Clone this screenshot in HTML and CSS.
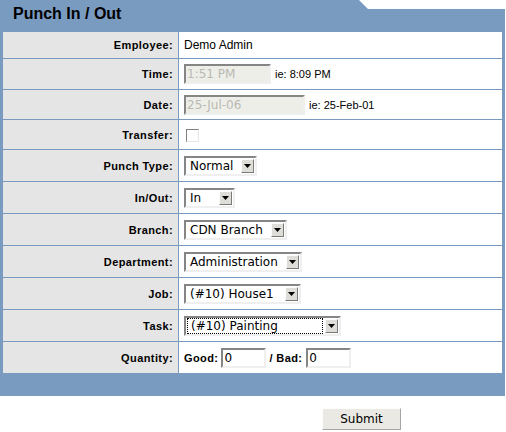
FILE: index.html
```html
<!DOCTYPE html>
<html>
<head>
    <meta charset="UTF-8">
    <title>Punch In / Out</title>
    <link rel="stylesheet" href="styles.css">
</head>
<body>
    <div class="frame">
        <div class="header">
            <h1>Punch In / Out</h1>
        </div>
        <table class="form">
            <tr class="row-emp">
                <td class="label">Employee:</td>
                <td class="value">Demo Admin</td>
            </tr>
            <tr class="row-time">
                <td class="label">Time:</td>
                <td class="value"><span class="input disabled w-time">1:51 PM</span><span class="hint">ie: 8:09 PM</span></td>
            </tr>
            <tr class="row-date">
                <td class="label">Date:</td>
                <td class="value"><span class="input disabled w-date">25-Jul-06</span><span class="hint">ie: 25-Feb-01</span></td>
            </tr>
            <tr class="row-check">
                <td class="label">Transfer:</td>
                <td class="value"><span class="checkbox"></span></td>
            </tr>
            <tr>
                <td class="label">Punch Type:</td>
                <td class="value"><span class="select w-normal"><span class="text">Normal</span><span class="arrow"><svg width="7" height="4" viewBox="0 0 7 4"><path d="M0 0H7L3.5 4Z" fill="#000"/></svg></span></span></td>
            </tr>
            <tr>
                <td class="label">In/Out:</td>
                <td class="value"><span class="select w-in"><span class="text">In</span><span class="arrow"><svg width="7" height="4" viewBox="0 0 7 4"><path d="M0 0H7L3.5 4Z" fill="#000"/></svg></span></span></td>
            </tr>
            <tr>
                <td class="label">Branch:</td>
                <td class="value"><span class="select w-branch"><span class="text">CDN Branch</span><span class="arrow"><svg width="7" height="4" viewBox="0 0 7 4"><path d="M0 0H7L3.5 4Z" fill="#000"/></svg></span></span></td>
            </tr>
            <tr>
                <td class="label">Department:</td>
                <td class="value"><span class="select w-dept"><span class="text">Administration</span><span class="arrow"><svg width="7" height="4" viewBox="0 0 7 4"><path d="M0 0H7L3.5 4Z" fill="#000"/></svg></span></span></td>
            </tr>
            <tr>
                <td class="label">Job:</td>
                <td class="value"><span class="select w-job"><span class="text">(#10) House1</span><span class="arrow"><svg width="7" height="4" viewBox="0 0 7 4"><path d="M0 0H7L3.5 4Z" fill="#000"/></svg></span></span></td>
            </tr>
            <tr>
                <td class="label">Task:</td>
                <td class="value"><span class="select w-task focused"><span class="text">(#10) Painting</span><span class="arrow"><svg width="7" height="4" viewBox="0 0 7 4"><path d="M0 0H7L3.5 4Z" fill="#000"/></svg></span></span></td>
            </tr>
            <tr>
                <td class="label">Quantity:</td>
                <td class="value"><span class="qty-label">Good:</span><span class="input w-qty">0</span><span class="qty-label sep">/ Bad:</span><span class="input w-qty">0</span></td>
            </tr>
        </table>
    </div>
    <div class="actions">
        <button class="submit">Submit</button>
    </div>
</body>
</html>
```

FILE: styles.css
```css
body {
    margin: 0;
    font-family: "Liberation Sans", Arial, sans-serif;
    color: #000;
    background-color: white;
}
.frame {
    width: 505px;
    box-sizing: border-box;
    padding: 0 3px 23px 3px;
    background-color: #7a9bc0;
    clip-path: polygon(0 0, 359px 0, 368px 9px, 100% 9px, 100% 100%, 0 100%);
}
.header {
    height: 32px;
}
.header h1 {
    margin: 0;
    padding: 5px 0 0 10px;
    font-size: 16px;
    line-height: 18px;
    font-weight: bold;
}
.form {
    width: 499px;
    border-collapse: separate;
    border-spacing: 0;
    background-color: white;
}
.form tr {
    height: 32px;
}
.form tr.row-emp { height: 26px; }
.form tr.row-time { height: 31px; }
.form tr.row-date { height: 30px; }
.form tr.row-check { height: 30px; }
.form td {
    padding: 0;
    vertical-align: middle;
}
.form tr + tr td {
    border-top: 1px solid #7a9bc0;
}
.label {
    width: 170px;
    padding-right: 5px !important;
    border-right: 1px solid #7a9bc0;
    background-color: #e5e5e5;
    text-align: right;
    font-size: 11px;
    font-weight: bold;
    letter-spacing: 0.4px;
}
.value {
    padding-left: 5px !important;
    font-size: 12px;
}
.input {
    display: inline-block;
    vertical-align: middle;
    box-sizing: border-box;
    height: 20px;
    padding: 0 1px;
    border: 2px solid;
    border-color: #858585 #efefef #efefef #858585;
    background-color: white;
    font-family: "DejaVu Sans", sans-serif;
    font-size: 12px;
    line-height: 16px;
}
.input.disabled {
    background-color: #eeeee9;
    color: #b9b9b3;
}
.w-time { width: 87px; }
.w-date { width: 121px; }
.w-qty { width: 45px; }
.hint {
    margin-left: 4px;
    font-size: 11px;
    vertical-align: middle;
}
.checkbox {
    display: inline-block;
    vertical-align: middle;
    width: 13px;
    height: 13px;
    box-sizing: border-box;
    margin-left: 2px;
    border: 1px solid;
    border-color: #7f7f7f #e6e6e6 #e6e6e6 #7f7f7f;
    background-color: white;
}
.select {
    display: inline-flex;
    align-items: center;
    vertical-align: middle;
    box-sizing: border-box;
    height: 20px;
    padding: 0 1px 0 2px;
    border: 2px solid;
    border-color: #858585 #efefef #efefef #858585;
    background-color: white;
    font-family: "DejaVu Sans", sans-serif;
    font-size: 12px;
}
.select .text {
    flex: 1;
    padding-left: 2px;
    line-height: 14px;
    white-space: nowrap;
}
.select .arrow {
    display: flex;
    align-items: center;
    justify-content: center;
    box-sizing: border-box;
    width: 13px;
    height: 14px;
    border: 1px solid;
    border-color: #fbfbfb #7a7a7a #7a7a7a #fbfbfb;
    background-color: #dfddd8;
}
.select.focused .text {
    outline: 1px dotted #000;
    margin-right: 3px;
    padding-left: 3px;
}
.w-normal { width: 73px; }
.w-in { width: 51px; }
.w-branch { width: 103px; }
.w-dept { width: 118px; }
.w-job { width: 117px; }
.w-task { width: 157px; }
.qty-label {
    font-size: 11px;
    font-weight: bold;
    letter-spacing: 0.4px;
    vertical-align: middle;
    margin-right: 3px;
}
.qty-label.sep {
    margin-left: 3px;
    margin-right: 4px;
}
.actions {
    padding: 12px 0 0 322px;
}
.submit {
    width: 79px;
    height: 22px;
    margin: 0;
    padding: 0;
    border: 1px solid;
    border-color: #fdfdfd #a7a6a2 #a7a6a2 #fdfdfd;
    background-color: #ebe9e4;
    font-family: "DejaVu Sans", sans-serif;
    font-size: 12px;
    color: #000;
}
```
